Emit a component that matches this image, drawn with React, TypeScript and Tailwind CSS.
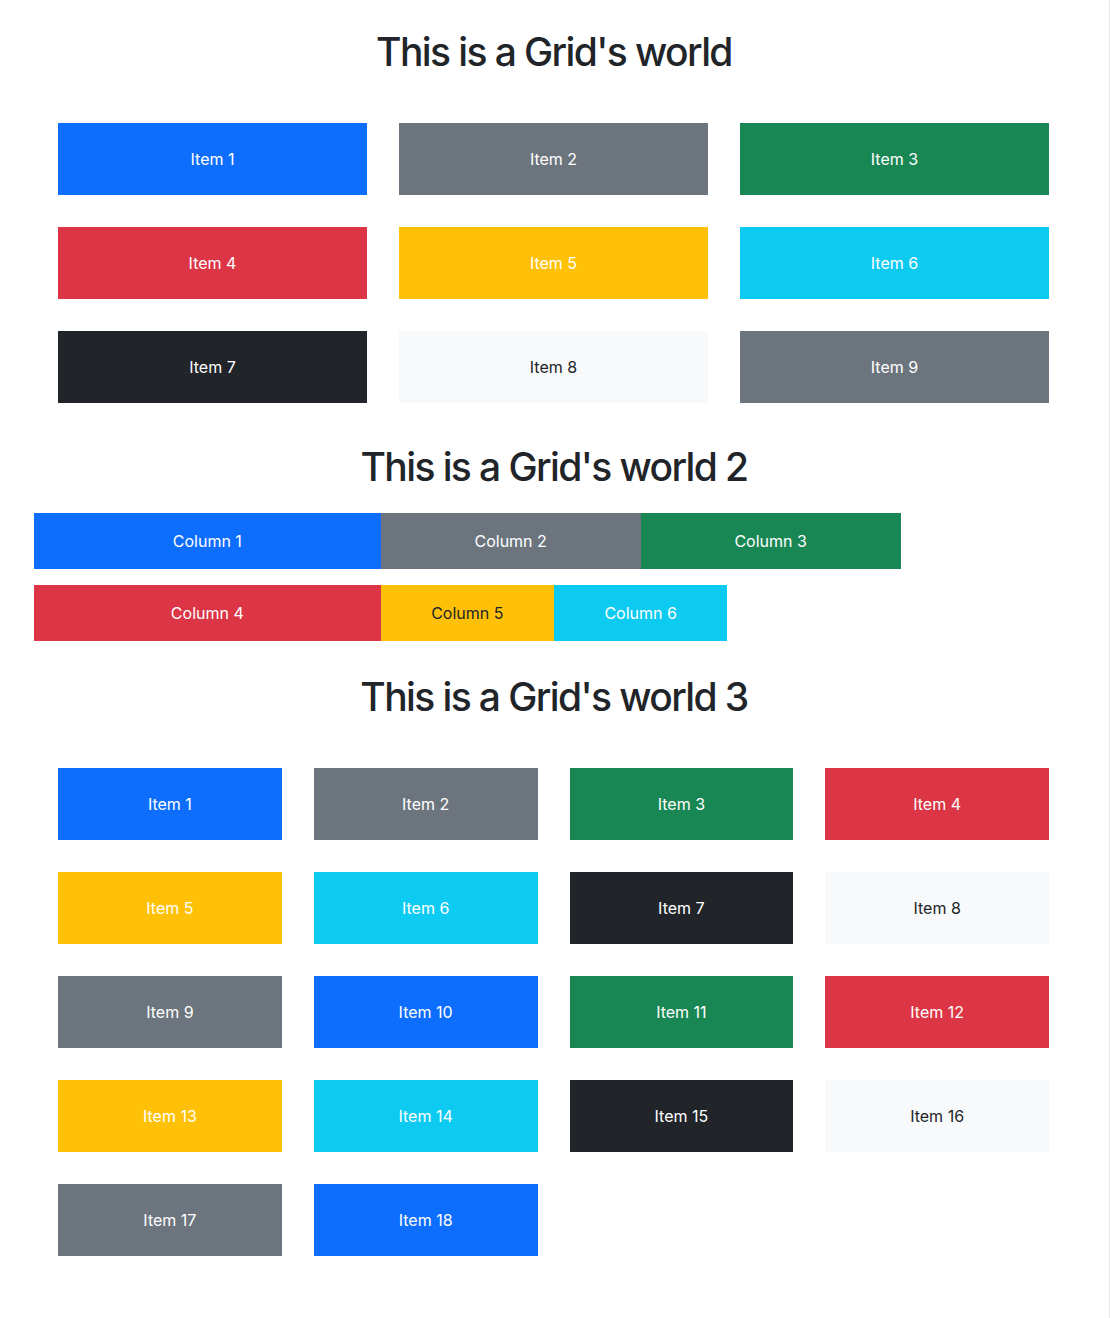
import React from 'react';

const colors: Record<string, string> = {
  primary: 'bg-[#0d6efd] text-white',
  secondary: 'bg-[#6c757d] text-white',
  success: 'bg-[#198754] text-white',
  danger: 'bg-[#dc3545] text-white',
  warning: 'bg-[#ffc107] text-white',
  info: 'bg-[#0dcaf0] text-white',
  dark: 'bg-[#212529] text-white',
  light: 'bg-[#f8f9fa] text-[#212529]',
};

const firstItems = ['primary', 'secondary', 'success', 'danger', 'warning', 'info', 'dark', 'light', 'secondary'];

const thirdItems = [
  'primary', 'secondary', 'success', 'danger', 'warning', 'info', 'dark', 'light',
  'secondary', 'primary', 'success', 'danger', 'warning', 'info', 'dark', 'light',
  'secondary', 'primary',
];

const Heading: React.FC<{ children: React.ReactNode; className?: string }> = ({ children, className }) => (
  <h1
    className={`text-center text-[39px] leading-[48px] font-medium tracking-[-1.6px] text-[#212529] ${className ?? ''}`}
  >
    {children}
  </h1>
);

const Box: React.FC<{ tone: string; label: string; className?: string }> = ({ tone, label, className }) => (
  <div className={`flex items-center justify-center text-base ${colors[tone]} ${className ?? ''}`}>{label}</div>
);

export default function App() {
  return (
    <div
      className="w-[1110px] min-h-[1318px] bg-white border-r border-[#e6e6e6]"
      style={{ fontFamily: 'Inter, "Noto Sans", sans-serif' }}
    >
      <div className="w-[1108px] pt-[28px] pb-[62px]">
        {/* Grid 1 */}
        <Heading>This is a Grid&apos;s world</Heading>
        <div className="ml-[58px] mt-[47px] grid w-[991px] grid-cols-3 gap-8">
          {firstItems.map((tone, i) => (
            <Box key={i} tone={tone} label={`Item ${i + 1}`} className="h-[72px]" />
          ))}
        </div>

        {/* Grid 2 */}
        <Heading className="mt-[40px]">This is a Grid&apos;s world 2</Heading>
        <div className="ml-[34px] mt-[22px] grid w-[1040px] grid-cols-12 gap-y-4">
          <Box tone="primary" label="Column 1" className="col-span-4 h-[56px]" />
          <Box tone="secondary" label="Column 2" className="col-span-3 h-[56px]" />
          <Box tone="success" label="Column 3" className="col-span-3 h-[56px]" />
          <div className="col-span-2" />
          <Box tone="danger" label="Column 4" className="col-span-4 h-[56px]" />
          <div className="col-span-2 flex h-[56px] items-center justify-center bg-[#ffc107] text-[#212529]">
            Column 5
          </div>
          <Box tone="info" label="Column 6" className="col-span-2 h-[56px]" />
        </div>

        {/* Grid 3 */}
        <Heading className="mt-[32px]">This is a Grid&apos;s world 3</Heading>
        <div className="ml-[58px] mt-[47px] grid w-[991px] grid-cols-4 gap-8">
          {thirdItems.map((tone, i) => (
            <Box key={i} tone={tone} label={`Item ${i + 1}`} className="h-[72px]" />
          ))}
        </div>
      </div>
    </div>
  );
}
